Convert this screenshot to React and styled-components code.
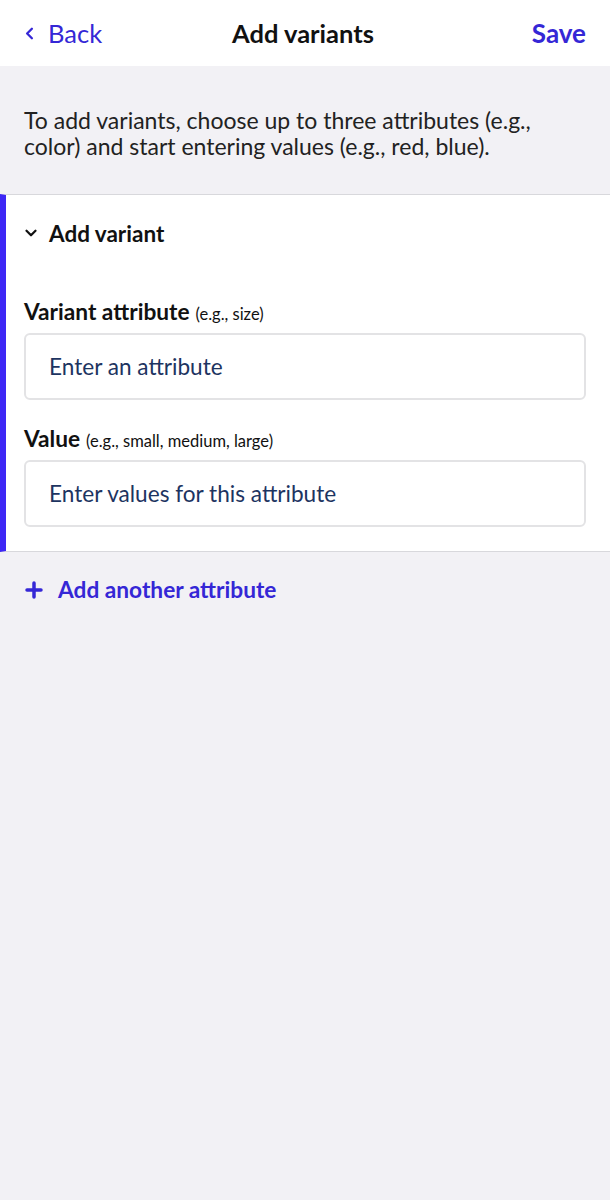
import React from 'react'
import styled, { createGlobalStyle } from 'styled-components'
import { ChevronLeft, ChevronDown, Plus } from 'lucide-react'

const GlobalStyle = createGlobalStyle`
  body {
    margin: 0;
    background: #f2f1f5;
    font-family: 'Lato', 'Noto Sans', sans-serif;
    color: #1a1a1a;
  }
  * { box-sizing: border-box; }
`

const Page = styled.div`
  min-height: 1200px;
  background: #f2f1f5;
`

const Header = styled.div`
  height: 66px;
  background: #fff;
  display: grid;
  grid-template-columns: 1fr auto 1fr;
  align-items: center;
  padding: 0 24px 0 20px;
`

const BackLink = styled.div`
  display: flex;
  align-items: center;
  gap: 9px;
  color: #3527d6;
  font-size: 25.5px;
`

const Title = styled.div`
  font-size: 25.5px;
  font-weight: 700;
  color: #111;
`

const SaveLink = styled.div`
  justify-self: end;
  color: #3527d6;
  font-size: 26px;
  font-weight: 700;
`

const Intro = styled.p`
  margin: 0;
  padding: 41px 24px 35px;
  font-size: 23px;
  line-height: 26px;
  color: #222;
`

const Section = styled.div`
  background: #fff;
  border-top: 1px solid #d8d8dc;
  border-bottom: 1px solid #d8d8dc;
  border-left: 6px solid #3d27f5;
  padding: 0 24px 24px 16px;
`

const SectionHead = styled.div`
  display: flex;
  align-items: center;
  gap: 9px;
  height: 76px;
  font-size: 22.5px;
  font-weight: 700;
  color: #111;
`

const Field = styled.div`
  margin-top: ${p => p.first ? '27px' : '25px'};
  padding-left: 2px;
`

const Label = styled.div`
  font-size: 22.7px;
  line-height: 28px;
  font-weight: 700;
  color: #111;
  margin-bottom: 7px;
  small {
    font-size: 16.5px;
    line-height: 1;
    font-weight: 400;
    margin-left: 6px;
  }
`

const Input = styled.div`
  height: 67px;
  border: 2px solid #e3e3e5;
  border-radius: 6px;
  display: flex;
  align-items: center;
  padding: 0 23px;
  font-size: 22.6px;
  color: #1d3461;
`

const AddAnother = styled.div`
  display: flex;
  align-items: center;
  gap: 12px;
  padding: 24px 22px;
  line-height: 28px;
  color: #3527d6;
  font-size: 22.7px;
  font-weight: 700;
`

const App = () => {
  return (
    <Page>
      <GlobalStyle />
      <Header>
        <BackLink>
          <ChevronLeft size={19} strokeWidth={3} />
          <span>Back</span>
        </BackLink>
        <Title>Add variants</Title>
        <SaveLink>Save</SaveLink>
      </Header>
      <Intro>
        To add variants, choose up to three attributes (e.g., color) and start entering values (e.g., red, blue).
      </Intro>
      <Section>
        <SectionHead>
          <ChevronDown size={18} strokeWidth={3} />
          <span>Add variant</span>
        </SectionHead>
        <Field first>
          <Label>Variant attribute<small>(e.g., size)</small></Label>
          <Input>Enter an attribute</Input>
        </Field>
        <Field>
          <Label>Value<small>(e.g., small, medium, large)</small></Label>
          <Input>Enter values for this attribute</Input>
        </Field>
      </Section>
      <AddAnother>
        <Plus size={24} strokeWidth={3.5} />
        <span>Add another attribute</span>
      </AddAnother>
    </Page>
  )
}

export default App
